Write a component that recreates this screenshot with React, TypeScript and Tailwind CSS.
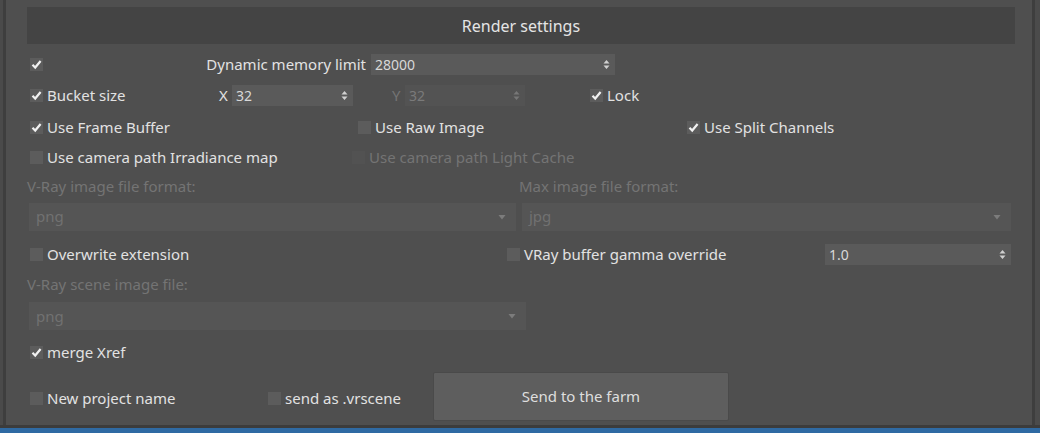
import type { ReactNode } from 'react';

const FONT = { fontFamily: '"Noto Sans", "Open Sans", Arial, sans-serif' };

function Check({ checked, disabled }: { checked?: boolean; disabled?: boolean }) {
  return (
    <div
      className={`flex h-[13px] w-[13px] shrink-0 items-center justify-center ${
        disabled ? 'bg-[#525252]' : 'bg-[#5c5c5c]'
      }`}
    >
      {checked && (
        <svg width="11" height="11" viewBox="0 0 11 11">
          <path d="M1.5 5.8 L4.2 8.5 L9.6 2" fill="none" stroke="#f2f2f2" strokeWidth="2.2" />
        </svg>
      )}
    </div>
  );
}

function CheckLabel({
  label,
  checked,
  disabled,
}: {
  label: string;
  checked?: boolean;
  disabled?: boolean;
}) {
  return (
    <div className="flex items-center gap-[4px]">
      <Check checked={checked} disabled={disabled} />
      <span className={disabled ? 'text-[#747474]' : 'text-[#e2e2e2]'}>{label}</span>
    </div>
  );
}

function Spinner({ value, width, disabled }: { value: string; width: string; disabled?: boolean }) {
  return (
    <div
      className={`flex h-[21px] items-center justify-between pl-[4px] pr-[5px] text-[14px] ${width} ${
        disabled ? 'bg-[#535353] text-[#7a7a7a]' : 'bg-[#5a5a5a] text-[#d8d8d8]'
      }`}
    >
      <span>{value}</span>
      <svg width="7" height="11" viewBox="0 0 7 11">
        <path d="M0.5 4.5 L3.5 1 L6.5 4.5 Z M0.5 6.5 L3.5 10 L6.5 6.5 Z" fill={disabled ? '#777' : '#d0d0d0'} />
      </svg>
    </div>
  );
}

function Dropdown({ value, width }: { value: string; width: string }) {
  return (
    <div
      className={`flex h-[28px] items-center justify-between border border-[#555] bg-[#555555] pl-[6px] pr-[9px] text-[#717171] ${width}`}
    >
      <span>{value}</span>
      <svg width="8" height="6" viewBox="0 0 8 6">
        <path d="M0.5 1 L7.5 1 L4 5.5 Z" fill="#7c7c7c" />
      </svg>
    </div>
  );
}

function Row({ h, children }: { h: string; children: ReactNode }) {
  return <div className={`flex items-center ${h}`}>{children}</div>;
}

export default function App() {
  return (
    <div className="flex h-[433px] w-[1040px] flex-col overflow-hidden bg-[#4b4b4b] text-[15px]" style={FONT}>
      <div className="flex min-h-0 flex-1">
        <div className="w-[3px] bg-[#4a4a4a]" />
        <div className="w-[3px] bg-[#3e3e3e]" />
        <div className="flex flex-1 flex-col bg-[#4f4f4f] pl-[21px] pr-[17px] pt-[7px]">
          {/* header */}
          <div className="flex h-[37px] w-[988px] shrink-0 items-center justify-center bg-[#444444] text-[16px] text-[#e4e4e4]">
            Render settings
          </div>

          <div className="h-[5px] shrink-0" />

          <Row h="h-[30px]">
            <div className="ml-[3px] w-[173px]">
              <Check checked />
            </div>
            <span className="w-[163px] whitespace-nowrap text-right text-[#e2e2e2]">Dynamic memory limit</span>
            <div className="ml-[5px]">
              <Spinner value="28000" width="w-[244px]" />
            </div>
          </Row>

          <Row h="h-[32px]">
            <div className="ml-[3px] w-[189px]">
              <CheckLabel label="Bucket size" checked />
            </div>
            <span className="w-[13px] text-[#e2e2e2]">X</span>
            <Spinner value="32" width="w-[121px]" />
            <span className="ml-[39px] w-[13px] text-[#747474]">Y</span>
            <Spinner value="32" width="w-[120px]" disabled />
            <div className="ml-[65px]">
              <CheckLabel label="Lock" checked />
            </div>
          </Row>

          <Row h="h-[32px]">
            <div className="ml-[3px] w-[328px]">
              <CheckLabel label="Use Frame Buffer" checked />
            </div>
            <div className="w-[329px]">
              <CheckLabel label="Use Raw Image" />
            </div>
            <CheckLabel label="Use Split Channels" checked />
          </Row>

          <Row h="h-[28px]">
            <div className="ml-[3px] w-[322px]">
              <CheckLabel label="Use camera path Irradiance map" />
            </div>
            <CheckLabel label="Use camera path Light Cache" disabled />
          </Row>

          <Row h="h-[30px]">
            <span className="w-[492px] text-[#747474]">V-Ray image file format:</span>
            <span className="text-[#747474]">Max image file format:</span>
          </Row>

          <Row h="h-[31px]">
            <div className="ml-[2px]">
              <Dropdown value="png" width="w-[487px]" />
            </div>
            <div className="ml-[6px]">
              <Dropdown value="jpg" width="w-[489px]" />
            </div>
          </Row>

          <Row h="h-[44px]">
            <div className="ml-[3px] w-[477px]">
              <CheckLabel label="Overwrite extension" />
            </div>
            <div className="w-[318px]">
              <CheckLabel label="VRay buffer gamma override" />
            </div>
            <Spinner value="1.0" width="w-[186px]" />
          </Row>

          <Row h="h-[16px]">
            <span className="text-[#747474]">V-Ray scene image file:</span>
          </Row>

          <Row h="h-[48px]">
            <div className="ml-[2px]">
              <Dropdown value="png" width="w-[497px]" />
            </div>
          </Row>

          <Row h="h-[24px]">
            <div className="ml-[3px]">
              <CheckLabel label="merge Xref" checked />
            </div>
          </Row>

          <div className="flex h-[61px] items-start pt-[8px]">
            <div className="ml-[3px] mt-[15px] w-[238px]">
              <CheckLabel label="New project name" />
            </div>
            <div className="mt-[15px] w-[165px]">
              <CheckLabel label="send as .vrscene" />
            </div>
            <button className="flex h-[49px] w-[296px] items-center justify-center rounded-[2px] border border-[#4a4a4a] bg-[#5e5e5e] text-[#dedede]">
              Send to the farm
            </button>
          </div>
        </div>
        <div className="w-[3px] bg-[#3e3e3e]" />
        <div className="w-[5px] bg-[#4b4b4b]" />
      </div>
      <div className="h-[3px] shrink-0 bg-[#3c3c3c]" />
      <div className="h-[5px] shrink-0 bg-[#2f6aa3]" />
    </div>
  );
}
